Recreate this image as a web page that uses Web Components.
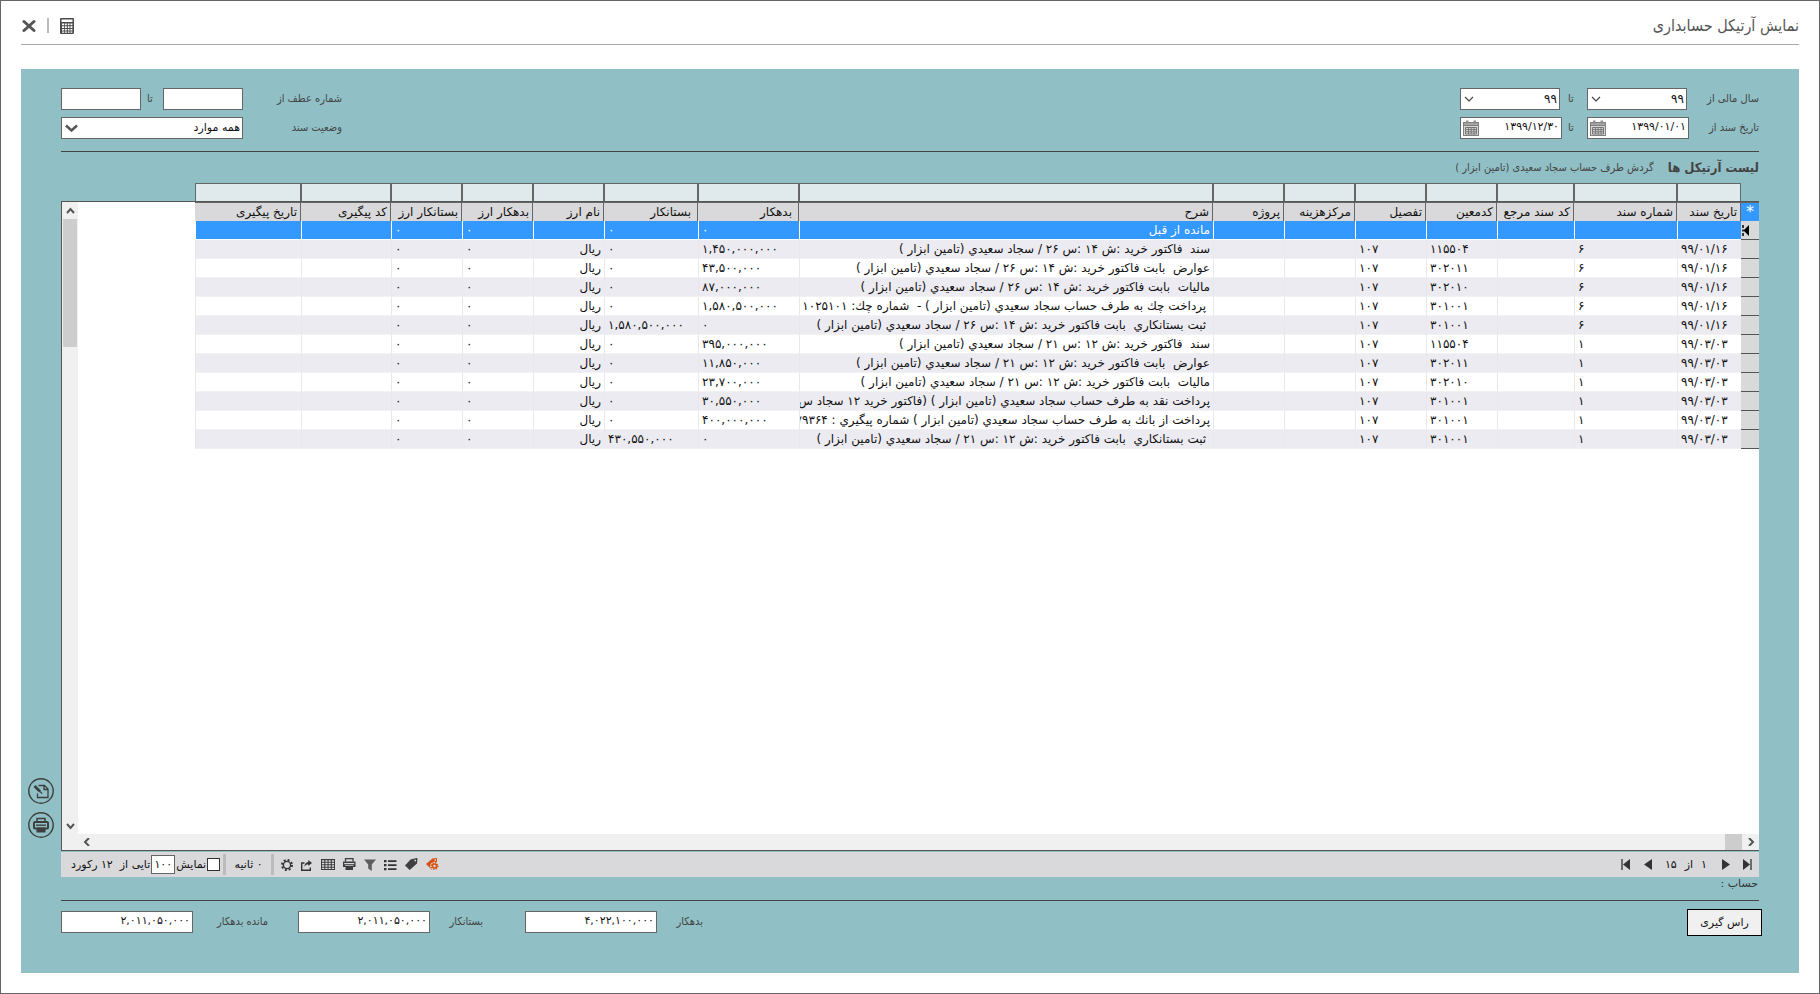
<!DOCTYPE html>
<html lang="fa" dir="rtl">
<head>
<meta charset="utf-8">
<title>نمایش آرتیکل حسابداری</title>
<style>
  body { margin: 0; background: #fff; color: #111; font: 12px/16px "DejaVu Sans", sans-serif; }
</style>
</head>
<body>
<app-window heading="نمایش آرتیکل حسابداری">
  <filter-bar slot="filters"></filter-bar>
  <list-heading slot="heading" heading="لیست آرتیکل ها">گردش طرف حساب سجاد سعیدی (تامین ابزار )</list-heading>
  <ledger-grid slot="grid"></ledger-grid>
  <grid-toolbar slot="toolbar"></grid-toolbar>
  <totals-bar slot="totals"></totals-bar>
  <side-actions slot="side"></side-actions>
</app-window>

<script>
const ICONS = {
  close: '<path d="M2 2.500L12 11.500M12 2.500L2 11.500" stroke="#555" stroke-width="3" stroke-linecap="round" fill="none"/>',
  calc: '<rect x="0" y="0" width="14" height="16" rx="1" fill="#4b4b4b"/><path d="M1.500 1.500h11v2.500h-11z" fill="#fff"/><path d="M2 5.500h2.200v1.800H2zM5 5.500h1.800v1.800H5zM7.800 5.500h1.700v1.800H7.800zM10.400 5.500h2v1.800h-2zM2 8.200h2.200V10H2zM5 8.200h1.800V10H5zM7.800 8.200h1.700V10H7.800zM10.400 8.200h2V10h-2zM2 11h2.200v1.600H2zM5 11h1.800v1.600H5zM7.800 11h1.700v1.600H7.800zM10.400 11h2v1.600h-2zM2 13.500h2.200v1.300H2zM5 13.500h1.800v1.300H5zM7.800 13.500h1.700v1.300H7.800zM10.400 13.500h2v1.300h-2z" fill="#fff"/>',
  calendar: '<rect x="0" y="2" width="16" height="14" fill="#808080"/><path d="M1 3h14v2H1z" fill="#a5a5a5"/><path d="M1 6h14v9H1z" fill="#d6d6d6"/><path d="M2.500 7.500h11v6.500h-11zM5.500 7.500v6.500M8.200 7.500v6.500M11 7.500v6.500M2.500 9.600h11M2.500 11.800h11" stroke="#777" stroke-width="1" fill="none"/><path d="M3 0.500h2.500v3H3zM10.500 0.500H13v3h-2.500z" fill="#8f8f8f"/>',
  gear: '<circle cx="6" cy="6" r="3.600" stroke="#333" stroke-width="1.400" fill="none"/><circle cx="6" cy="6" r="5" stroke="#333" stroke-width="2" stroke-dasharray="1.960 1.967" fill="none"/>',
  share: '<path d="M3.500 4H.7v7.300h8.600V8.500" stroke="#333" stroke-width="1.400" fill="none"/><path d="M7.300 1l3.700 3-3.700 3V5.200C5.500 5.200 4.200 6 3.300 8 3.400 5 5 3.200 7.300 3z" fill="#333"/>',
  table: '<rect x="0" y="1" width="14" height="11" fill="#3c3c3c"/><path d="M1 2.200h2.300v1.500H1zM4.300 2.200h2.300v1.500H4.300zM7.500 2.200h2.300v1.500H7.500zM10.800 2.200H13v1.500h-2.200zM1 4.700h2.300v1.500H1zM4.300 4.700h2.300v1.500H4.300zM7.500 4.700h2.300v1.500H7.500zM10.800 4.700H13v1.500h-2.200zM1 7.200h2.300v1.500H1zM4.300 7.200h2.300v1.500H4.300zM7.500 7.200h2.300v1.500H7.500zM10.800 7.200H13v1.500h-2.200zM1 9.700h2.300v1.400H1zM4.300 9.700h2.300v1.400H4.300zM7.500 9.700h2.300v1.400H7.500zM10.800 9.700H13v1.400h-2.200z" fill="#d9d9db"/>',
  print: '<path d="M2.500 3.500V.7h7.500v2.800" stroke="#3c3c3c" stroke-width="1.300" fill="none"/><path d="M0 3.500h12.500V9H0z" fill="#3c3c3c"/><path d="M1.200 5h10v1.200h-10z" fill="#d9d9db"/><path d="M2.500 8h7.500v4H2.500z" fill="#3c3c3c"/><path d="M2 7.500h8.500" stroke="#d9d9db" stroke-width=".7"/>',
  funnel: '<path d="M0 .5h12L7.800 5.500V12l-3.600-2.500v-4z" fill="#5d5d5f"/>',
  list: '<path d="M0 1h2.500v2.300H0zM0 5h2.500v2.300H0zM0 9h2.500v2.300H0zM4 1.200h8.500v1.800H4zM4 5.200h8.500V7H4zM4 9.200h8.500V11H4z" fill="#333"/>',
  tag: '<path d="M0 7.500L5.500 1.500 11.500 0c.8 0 1 .3 1 .8L12 5.500 4.700 12z" fill="#3f3f41"/><circle cx="10.200" cy="2.500" r=".9" fill="#d9d9db"/>',
  tagGear: '<path d="M0 6L6.500 .5 11 0v4L6 12z" fill="#d8500f"/><circle cx="8.500" cy="8" r="4.300" fill="#d9d9db"/><circle cx="8.500" cy="8" r="2" stroke="#d8500f" stroke-width="1.500" fill="none"/><circle cx="8.500" cy="8" r="3.200" stroke="#d8500f" stroke-width="1.400" stroke-dasharray="1.300 1.210" fill="none"/><circle cx="9.300" cy="2" r=".8" fill="#fff"/>',
  editDoc: '<g stroke="#3e3e3e" fill="none"><circle cx="13" cy="13" r="12.200" stroke-width="1.400"/><path d="M10.500 7.500h6l3.500 3.500v8.500H9.500v-4M16 7.500V11.500H20" stroke-width="1.300"/><path d="M6.500 8l5.500 5.500" stroke-width="2.600"/><path d="M12 13.500l2.200 2.200" stroke-width="1.200"/></g>',
  printRound: '<circle cx="13" cy="13" r="12.200" stroke="#3e3e3e" stroke-width="1.400" fill="none"/><path d="M9 9.500V6.500h8v3" stroke="#3e3e3e" stroke-width="1.500" fill="none"/><rect x="6" y="10" width="14" height="6.500" rx="1" stroke="#3e3e3e" stroke-width="2" fill="none"/><path d="M8 13.200h10" stroke="#3e3e3e" stroke-width="1.400"/><path d="M8.500 15.500h9v5h-9z" fill="#3e3e3e"/>',
  first: '<path d="M1 0v11" stroke="#222" stroke-width="1.200"/><path d="M9 0v11L2 5.500z" fill="#333"/>',
  prev: '<path d="M8 0v11L0 5.500z" fill="#333"/>',
  next: '<path d="M0 0v11l8-5.500z" fill="#333"/>',
  last: '<path d="M8 0v11" stroke="#222" stroke-width="1.200"/><path d="M0 0v11l7-5.500z" fill="#333"/>',
  up: '<path d="M1 6l3.500-4L8 6" stroke="#555" stroke-width="2" fill="none"/>',
  down: '<path d="M1 2l3.500 4L8 2" stroke="#555" stroke-width="2" fill="none"/>',
  left: '<path d="M6 0L2 4l4 4" stroke="#555" stroke-width="2" fill="none"/>',
  right: '<path d="M2 0l4 4-4 4" stroke="#555" stroke-width="2" fill="none"/>',
  chevron: '<path d="M1 2l4 4 4-4" stroke="#444" stroke-width="1.200" fill="none"/>',
  chevronBig: '<path d="M1 1.500l5.500 5 5.500-5" stroke="#555" stroke-width="2.500" fill="none"/>',
  current: '<path d="M7 0v11L1.500 5.500z" fill="#000"/><path d="M1 0v3M1 8v3M1 4.500v2" stroke="#000" stroke-width="1.500"/>'
};

const BASE = `
  :host { display: block; box-sizing: border-box; }
  *, *::before { box-sizing: border-box; }
  button { font: inherit; color: inherit; background: none; border: 0; padding: 0; margin: 0; display: block; }
  input, select { font: 11px "DejaVu Sans", sans-serif; color: #111; margin: 0; width: 100%; height: 22px;
    border: 1px solid #666; border-radius: 0; background: #fff; outline: 0; appearance: none; }
`;

class Base extends HTMLElement {
  connectedCallback() {
    if (this.shadowRoot) return;
    this.attachShadow({ mode: 'open' }).innerHTML =
      '<style>' + BASE + this.styles() + '</style>' + this.markup();
  }
  styles() { return ''; }
  markup() { return '<slot></slot>'; }
}

customElements.define('app-icon', class extends Base {
  styles() { return ':host { display: block; flex: none; } svg { display: block; }'; }
  markup() {
    const [w, h] = this.getAttribute('box').split(' ');
    return `<svg width="${w}" height="${h}" viewBox="0 0 ${w} ${h}" aria-hidden="true">${ICONS[this.getAttribute('name')]}</svg>`;
  }
});

customElements.define('app-window', class extends Base {
  styles() { return `
    :host { display: flex; flex-direction: column; min-height: 100vh; padding: 0 20px 20px; border: 1px solid #666; }
    header { display: flex; align-items: center; justify-content: space-between; height: 44px; border-bottom: 1px solid #aaa;
      margin-bottom: 24px; padding-top: 6px; flex: none; }
    h1 { margin: 0; font: 16px/20px "DejaVu Sans Condensed", "DejaVu Sans", sans-serif; color: #555; }
    nav { display: flex; align-items: center; gap: 11px; margin-left: 1px; }
    .bar { width: 2px; height: 15px; background: #bbb; }
    .panel { flex: 1; display: grid; grid-template-columns: 40px minmax(0, 1fr) 40px; background: #90c0c6; }
    main { grid-column: 2; display: flex; flex-direction: column; }
    .grow { flex: 1; display: flex; }
    ::slotted([slot=grid]) { flex: 1; }`; }
  markup() { return `
    <header>
      <h1>${this.getAttribute('heading')}</h1>
      <nav>
        <button type="button" aria-label="ماشین حساب"><app-icon name="calc" box="14 16"></app-icon></button>
        <span class="bar"></span>
        <button type="button" aria-label="بستن"><app-icon name="close" box="14 14"></app-icon></button>
      </nav>
    </header>
    <div class="panel">
      <main>
        <slot name="filters"></slot>
        <slot name="heading"></slot>
        <div class="grow"><slot name="grid"></slot></div>
        <slot name="toolbar"></slot>
        <slot name="totals"></slot>
      </main>
      <slot name="side"></slot>
    </div>`; }
});

customElements.define('select-field', class extends Base {
  styles() { return `
    :host { position: relative; }
    select { display: block; padding: 0 2px 0 20px; line-height: 20px; ${this.hasAttribute('big') ? 'padding-bottom: 2px;' : 'font-size: 12px;'} }
    app-icon { position: absolute; left: 4px; top: 7px; pointer-events: none; }`; }
  markup() {
    const big = this.hasAttribute('big');
    return `<select aria-label="${this.getAttribute('label')}"><option>${this.getAttribute('value')}</option></select>
      <app-icon name="${big ? 'chevronBig' : 'chevron'}" box="${big ? '13 8' : '10 8'}"></app-icon>`;
  }
});

customElements.define('date-field', class extends Base {
  styles() { return `
    :host { position: relative; }
    input { display: block; padding: 0 2px 4px 22px; text-align: right; direction: ltr; }
    button { position: absolute; left: 3px; top: 3px; }`; }
  markup() { return `<input type="text" aria-label="${this.getAttribute('label')}" value="${this.getAttribute('value')}">
    <button type="button" aria-label="تقویم"><app-icon name="calendar" box="16 16"></app-icon></button>`; }
});

customElements.define('filter-bar', class extends Base {
  styles() { return `
    :host { display: flex; justify-content: space-between; padding: 19px 0 12px; border-bottom: 1px solid #444;
      font-family: "DejaVu Sans Condensed", "DejaVu Sans", sans-serif; font-size: 11px; color: #444; }
    .group { display: grid; row-gap: 7px; align-items: center; }
    .period { grid-template-columns: 70px 102px 25px 102px; }
    .period select-field { width: 100px; justify-self: end; }
    .ref { grid-template-columns: 99px 80px 22px 80px; }
    .wide { grid-column: span 3; }
    .to { justify-self: end; padding-left: 6px; }`; }
  markup() { return `
    <div class="group period">
      <span>سال مالی از</span><select-field label="سال مالی از" value="۹۹"></select-field>
      <span class="to">تا</span><select-field label="سال مالی تا" value="۹۹"></select-field>
      <span>تاریخ سند از</span><date-field label="تاریخ سند از" value="۱۳۹۹/۰۱/۰۱"></date-field>
      <span class="to">تا</span><date-field label="تاریخ سند تا" value="۱۳۹۹/۱۲/۳۰"></date-field>
    </div>
    <div class="group ref">
      <label for="from">شماره عطف از</label><input id="from" type="text">
      <label class="to" for="to">تا</label><input id="to" type="text">
      <span>وضعیت سند</span><select-field class="wide" big label="وضعیت سند" value="همه موارد"></select-field>
    </div>`; }
});

customElements.define('list-heading', class extends Base {
  styles() { return `
    :host { display: flex; align-items: center; gap: 14px; height: 31px; color: #444;
      font: 11px/16px "DejaVu Sans Condensed", "DejaVu Sans", sans-serif; }
    h2 { margin: 0; font-size: 13px; line-height: 18px; font-weight: bold; }`; }
  markup() { return `<h2>${this.getAttribute('heading')}</h2><span><slot></slot></span>`; }
});

const COLUMNS = [['تاریخ سند', 64], ['شماره سند', 103], ['کد سند مرجع', 77], ['کدمعین', 71], ['تفصیل', 71], ['مرکزهزینه', 71],
  ['پروژه', 71], ['شرح', 0], ['بدهکار', 101], ['بستانکار', 94], ['نام ارز', 71], ['بدهکار ارز', 71], ['بستانکار ارز', 71],
  ['کد پیگیری', 90], ['تاریخ پیگیری', 106]];
const NAME = 'سجاد سعيدي (تامين ابزار )';
const D1 = '۹۹/۰۱/۱۶', D2 = '۹۹/۰۳/۰۳', R = 'ریال';
const F1 = ':ش ۱۴ :س ۲۶ / ' + NAME, F2 = ':ش ۱۲ :س ۲۱ / ' + NAME;
const ROWS = [
  ['', '', '', '', 'مانده از قبل', '۰', '۰', ''],
  [D1, '۶', '۱۱۵۵۰۴', '۱۰۷', 'سند  فاكتور خريد ' + F1, '۱,۴۵۰,۰۰۰,۰۰۰', '۰', R],
  [D1, '۶', '۳۰۲۰۱۱', '۱۰۷', 'عوارض  بابت فاكتور خريد ' + F1, '۴۳,۵۰۰,۰۰۰', '۰', R],
  [D1, '۶', '۳۰۲۰۱۰', '۱۰۷', 'ماليات  بابت فاكتور خريد ' + F1, '۸۷,۰۰۰,۰۰۰', '۰', R],
  [D1, '۶', '۳۰۱۰۰۱', '۱۰۷', ' پرداخت چك به طرف حساب ' + NAME + ' -  شماره چك: ۱۰۲۵۱۰۱', '۱,۵۸۰,۵۰۰,۰۰۰', '۰', R],
  [D1, '۶', '۳۰۱۰۰۱', '۱۰۷', ' ثبت بستانكاري  بابت فاكتور خريد ' + F1, '۰', '۱,۵۸۰,۵۰۰,۰۰۰', R],
  [D2, '۱', '۱۱۵۵۰۴', '۱۰۷', 'سند  فاكتور خريد ' + F2, '۳۹۵,۰۰۰,۰۰۰', '۰', R],
  [D2, '۱', '۳۰۲۰۱۱', '۱۰۷', 'عوارض  بابت فاكتور خريد ' + F2, '۱۱,۸۵۰,۰۰۰', '۰', R],
  [D2, '۱', '۳۰۲۰۱۰', '۱۰۷', 'ماليات  بابت فاكتور خريد ' + F2, '۲۳,۷۰۰,۰۰۰', '۰', R],
  [D2, '۱', '۳۰۱۰۰۱', '۱۰۷', 'پرداخت نقد به طرف حساب ' + NAME + ' (فاكتور خريد ۱۲ سجاد س', '۳۰,۵۵۰,۰۰۰', '۰', R],
  [D2, '۱', '۳۰۱۰۰۱', '۱۰۷', 'پرداخت از بانك به طرف حساب ' + NAME + ' شماره پيگيري : ۷۹۳۶۴', '۴۰۰,۰۰۰,۰۰۰', '۰', R],
  [D2, '۱', '۳۰۱۰۰۱', '۱۰۷', ' ثبت بستانكاري  بابت فاكتور خريد ' + F2, '۰', '۴۳۰,۵۵۰,۰۰۰', R]
];

customElements.define('ledger-grid', class extends Base {
  styles() { return `
    :host { display: flex; flex-direction: column; }
    .filters { display: grid; height: 18px; margin: 0 18px 0 134px;
      grid-template-columns: ${COLUMNS.map(c => c[1] ? c[1] + 'px' : 'minmax(0, 1fr)').join(' ')}; }
    .filters input { height: 18px; border-bottom: 0; background: #e0e9eb; }
    .box { flex: 1; display: grid; grid-template-columns: minmax(0, 1fr) 16px; grid-template-rows: 1fr 16px;
      border: 1px solid #555; border-right: 0; background: #fff; }
    .vbar, .hbar { display: flex; background: #f0f0f0; align-items: center; }
    .vbar { flex-direction: column; grid-row: 1; grid-column: 2; }
    .hbar { grid-row: 2; grid-column: 1; }
    .corner { background: #f0f0f0; }
    .arrow { width: 16px; height: 17px; display: flex; align-items: center; justify-content: center; flex: none; }
    .hbar .arrow { height: 16px; width: 17px; }
    .vbar i { width: 14px; height: 128px; background: #cdcdcd; }
    .hbar i { width: 17px; height: 16px; background: #cdcdcd; }
    .gap { flex: 1; }
    table { table-layout: fixed; width: calc(100% - 117px); border-spacing: 0; border-top: 1px solid #666; font-size: 12px; line-height: 16px; }
    th, td { height: 19px; padding: 0 3px; overflow: hidden; white-space: pre; font-weight: normal; text-align: right; }
    thead th { height: 18px; background: #d9d9db; border-right: 1px solid #666; }
    thead th:first-child { background: #39f; color: #fff; border-right: 0; text-align: center; font-size: 16px; padding: 0; }
    thead th:nth-child(10), thead th:nth-child(11) { padding-right: 6px; }
    tbody th { background: #d9d9d9; border-bottom: 1px solid #555; padding: 0; }
    tbody th app-icon { margin-right: 9px; }
    td { border-left: 1px solid #e8e8ec; border-bottom: 1px solid #f2f2f4; }
    td.desc { padding-left: 0; }
    td.num { text-align: left; direction: ltr; padding-left: 3px; }
    tbody tr:nth-child(even) td { background: #ecebf1; }
    tbody tr:first-child td { background: #39f; color: #fff; border-left-color: #fff; border-bottom-color: #fff; }`; }
  markup() {
    const row = (r, i) => {
      const cells = [r[0], r[1], '', r[2], r[3], '', '', r[4], r[5], r[6], r[7], '۰', '۰', '', ''];
      return `<tr><th>${i ? '' : '<app-icon name="current" box="8 11"></app-icon>'}</th>` + cells.map((c, k) =>
        `<td class="${k === 7 ? 'desc' : k === 10 ? '' : 'num'}">${c}</td>`).join('') + '</tr>';
    };
    const arrow = (n, label, box) => `<button type="button" class="arrow" aria-label="${label}"><app-icon name="${n}" box="${box}"></app-icon></button>`;
    return `
      <div class="filters">${COLUMNS.map(c => `<input type="text" aria-label="${c[0]}">`).join('')}</div>
      <div class="box">
        <div>
          <table>
            <colgroup><col style="width:18px">${COLUMNS.map(c => `<col${c[1] ? ` style="width:${c[1]}px"` : ''}>`).join('')}</colgroup>
            <thead><tr><th>*</th>${COLUMNS.map(c => `<th>${c[0]}</th>`).join('')}</tr></thead>
            <tbody>${ROWS.map(row).join('')}</tbody>
          </table>
        </div>
        <div class="vbar">${arrow('up', 'بالا', '9 8')}<i></i><span class="gap"></span>${arrow('down', 'پایین', '9 8')}</div>
        <div class="hbar">${arrow('right', 'راست', '8 8')}<i></i><span class="gap"></span>${arrow('left', 'چپ', '8 8')}</div>
        <div class="corner"></div>
      </div>`;
  }
});

customElements.define('grid-toolbar', class extends Base {
  styles() { return `
    :host { display: flex; align-items: center; justify-content: space-between; height: 25px; margin-top: 1px; flex: none;
      background: #d9d9db; font-size: 11px; padding: 0 7px 0 10px; }
    .pages, .tools, .icons, .show { display: flex; align-items: center; }
    .pages { gap: 13px; }
    .pages .text { display: flex; gap: 8px; padding: 0 2px 0 0; }
    .icons { gap: 8px; margin-left: 7px; }
    .sep { width: 3px; height: 21px; background: #bcbcbc; align-self: end; }
    .time { width: 45px; text-align: center; }
    .show { gap: 1px; margin-right: 3px; }
    .show input { width: 13px; height: 13px; border-color: #333; }
    .show input.count { width: 24px; height: 19px; text-align: center; padding: 0; border-color: #666; }
    .records { white-space: pre; }
    label { display: block; }`; }
  markup() {
    const b = (n, l, box) => `<button type="button" aria-label="${l}"><app-icon name="${n}" box="${box}"></app-icon></button>`;
    return `
    <div class="pages">
      ${b('last', 'آخرین', '9 11')}${b('next', 'بعدی', '8 11')}
      <span class="text"><span>۱</span><span>از</span><span>۱۵</span></span>
      ${b('prev', 'قبلی', '8 11')}${b('first', 'اولین', '10 11')}
    </div>
    <div class="tools">
      <div class="icons">
        ${b('tagGear', 'تنظیم برچسب', '13 13')}${b('tag', 'برچسب', '13 13')}${b('list', 'فهرست', '13 12')}${b('funnel', 'فیلتر', '12 12')}
        ${b('print', 'چاپ', '13 13')}${b('table', 'جدول', '14 13')}${b('share', 'ارسال', '12 12')}${b('gear', 'تنظیمات', '12 12')}
      </div>
      <span class="sep"></span><span class="time">۰ ثانیه</span><span class="sep"></span>
      <div class="show">
        <input type="checkbox" id="paged"><label for="paged">نمایش</label>
        <input type="text" class="count" value="۱۰۰" aria-label="تعداد در صفحه">
        <span class="records">تایی از  ۱۲ رکورد</span>
      </div>
    </div>`;
  }
});

customElements.define('totals-bar', class extends Base {
  styles() { return `
    .account { height: 24px; border-bottom: 1px solid #444; font-size: 11px; line-height: 13px; padding-right: 1px; color: #333; }
    .row { display: flex; justify-content: space-between; align-items: start; height: 72px; padding-top: 8px; }
    .ok { width: 75px; height: 27px; margin-right: -3px; border: 1px solid #000; background: #f0f0f0; font-size: 11px; }
    .sums { display: grid; grid-template-columns: 46px 132px 22px 73px 132px 30px 75px 132px; align-items: center; padding-top: 2px;
      font-family: "DejaVu Sans Condensed", "DejaVu Sans", sans-serif; font-size: 11px; color: #444; }
    .sums input { direction: ltr; text-align: right; padding: 0 2px 4px; }
    .sums label { white-space: nowrap; }
    .credit { grid-column: 4; padding-right: 20px; }
    .balance { grid-column: 7; }`; }
  markup() { return `
    <div class="account">حساب :</div>
    <div class="row">
      <button type="button" class="ok">راس گیری</button>
      <div class="sums">
        <label for="debit">بدهکار</label><input id="debit" type="text" value="۴,۰۲۲,۱۰۰,۰۰۰">
        <label class="credit" for="credit">بستانکار</label><input id="credit" type="text" value="۲,۰۱۱,۰۵۰,۰۰۰">
        <label class="balance" for="balance">مانده بدهکار</label><input id="balance" type="text" value="۲,۰۱۱,۰۵۰,۰۰۰">
      </div>
    </div>`; }
});

customElements.define('side-actions', class extends Base {
  styles() { return `
    :host { grid-column: 3; display: flex; flex-direction: column; justify-content: end; align-items: center; gap: 8px; padding-bottom: 135px; }`; }
  markup() { return `
    <button type="button" aria-label="ویرایش"><app-icon name="editDoc" box="26 26"></app-icon></button>
    <button type="button" aria-label="چاپ"><app-icon name="printRound" box="26 26"></app-icon></button>`; }
});
</script>
</body>
</html>
